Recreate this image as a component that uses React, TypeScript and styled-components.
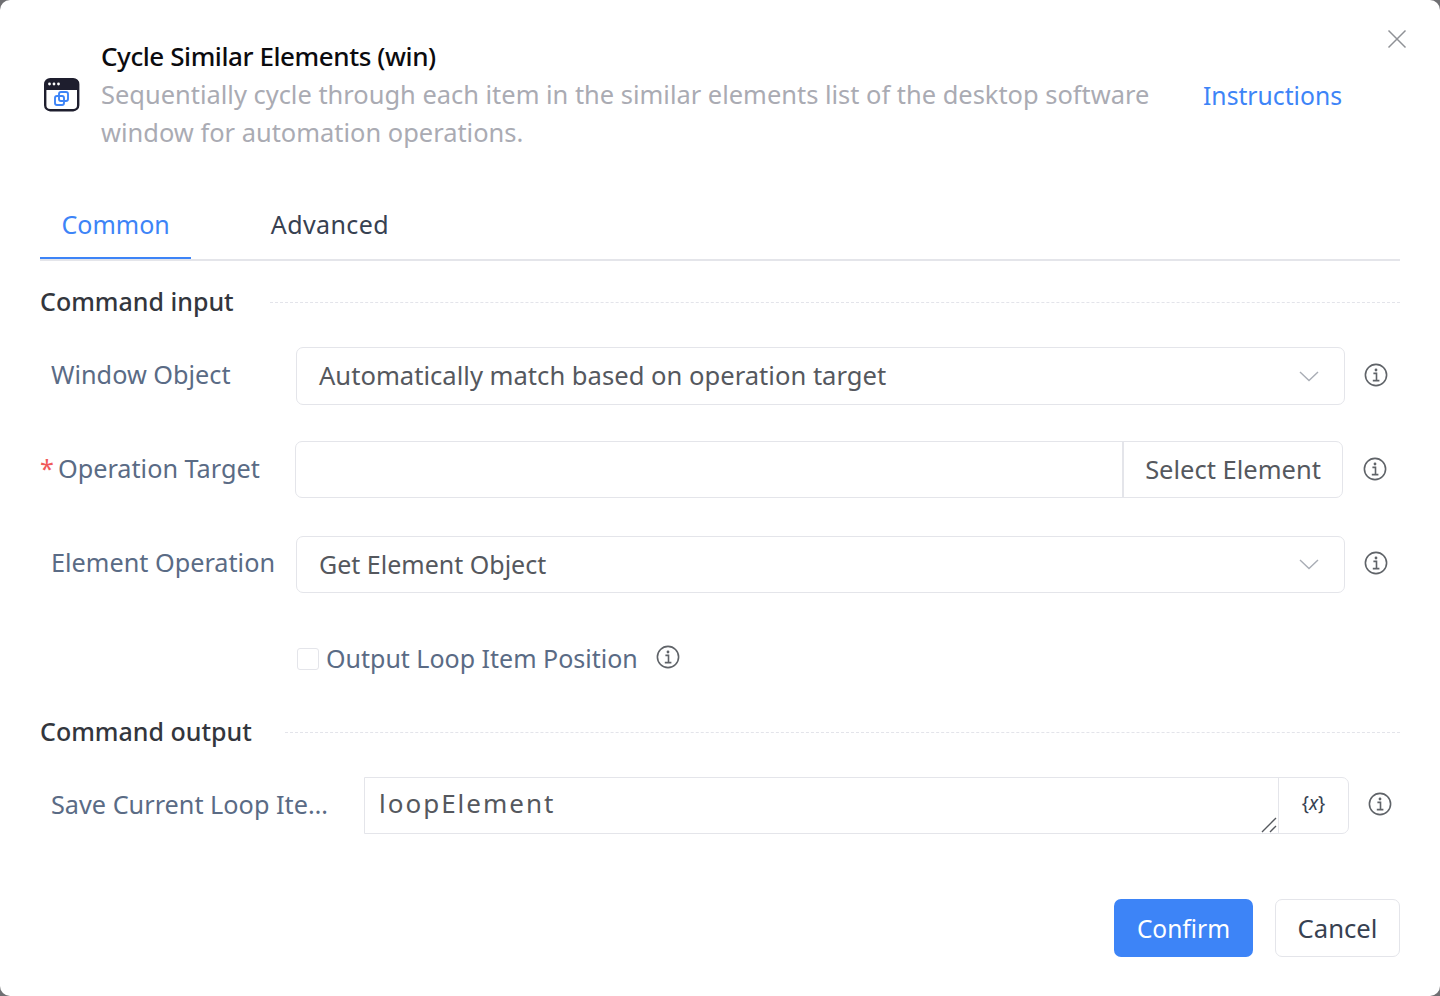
import { createGlobalStyle } from 'styled-components'
import styled from 'styled-components'

const GlobalStyle = createGlobalStyle`
  html, body {
    margin: 0;
    padding: 0;
    background: #6f6f72;
  }
  * {
    box-sizing: border-box;
  }
`

const InfoIcon = () => (
  <InfoSvg viewBox="0 0 24 24" fill="none" stroke="#5f6368">
    <circle cx="12" cy="12" r="10.6" strokeWidth="1.6" />
    <circle cx="12" cy="7" r="1.4" fill="#5f6368" stroke="none" />
    <path d="M9.4 10.4h3.1v7M8.8 17.6h6.6" strokeWidth="1.6" />
  </InfoSvg>
)

const Chevron = () => (
  <ChevronSvg viewBox="0 0 20 11" fill="none" stroke="#a9adb5" strokeWidth="1.4">
    <path d="M1 1l9 8.6L19 1" />
  </ChevronSvg>
)

const WindowIcon = () => (
  <svg width="36" height="34" viewBox="0 0 36 34" fill="none">
    <rect x="1.2" y="1.2" width="33" height="31" rx="5" fill="#fff" stroke="#1e1e2e" strokeWidth="2.4" />
    <path d="M1 12V6a5 5 0 0 1 5-5h24a5 5 0 0 1 5 5v6z" fill="#1e1e2e" />
    <circle cx="5.5" cy="6" r="1.4" fill="#fff" />
    <circle cx="10" cy="6" r="1.4" fill="#fff" />
    <circle cx="14.5" cy="6" r="1.4" fill="#fff" />
    <rect x="11" y="18" width="9" height="9" rx="2" stroke="#3d84f7" strokeWidth="1.9" />
    <rect x="15" y="14" width="9" height="9" rx="2" stroke="#3d84f7" strokeWidth="1.9" />
  </svg>
)

export default function App() {
  return (
    <>
      <GlobalStyle />
      <Dialog>
        <CloseButton aria-label="close">
          <svg width="20" height="20" viewBox="0 0 20 20" stroke="#8f9196" strokeWidth="1.5">
            <path d="M1.5 1.5l17 17M18.5 1.5l-17 17" />
          </svg>
        </CloseButton>
        <Header>
          <IconSlot>
            <WindowIcon />
          </IconSlot>
          <HeaderText>
            <Title>Cycle Similar Elements (win)</Title>
            <Description>
              Sequentially cycle through each item in the similar elements list of the desktop software window for
              automation operations.
            </Description>
          </HeaderText>
          <HelpLink>Instructions</HelpLink>
        </Header>

        <Tabs>
          <Tab $active>Common</Tab>
          <Tab>Advanced</Tab>
        </Tabs>

        <SectionHead $top={22} $gap={36}>
          <SectionTitle>Command input</SectionTitle>
          <SectionRule />
        </SectionHead>

        <FormRow $top={28}>
          <FieldLabel>Window Object</FieldLabel>
          <SelectBox $height={58}>
            <SelectValue $size={25.6}>Automatically match based on operation target</SelectValue>
            <Chevron />
          </SelectBox>
          <InfoSlot>
            <InfoIcon />
          </InfoSlot>
        </FormRow>

        <FormRow $top={37}>
          <FieldLabel $required>
            <Star>*</Star>Operation Target
          </FieldLabel>
          <TargetGroup>
            <TargetInput />
            <TargetButton>Select Element</TargetButton>
          </TargetGroup>
          <InfoSlot>
            <InfoIcon />
          </InfoSlot>
        </FormRow>

        <FormRow $top={38}>
          <FieldLabel $lift={6}>Element Operation</FieldLabel>
          <SelectBox $height={57}>
            <SelectValue $size={25}>Get Element Object</SelectValue>
            <Chevron />
          </SelectBox>
          <InfoSlot $lift={4}>
            <InfoIcon />
          </InfoSlot>
        </FormRow>

        <CheckRow>
          <CheckBox />
          <CheckText>Output Loop Item Position</CheckText>
          <InfoIcon />
        </CheckRow>

        <SectionHead $top={37} $gap={33}>
          <SectionTitle>Command output</SectionTitle>
          <SectionRule />
        </SectionHead>

        <OutputRow>
          <OutputLabel>Save Current Loop Item To</OutputLabel>
          <OutputGroup>
            <OutputValue>
              loopElement
              <ResizeGrip viewBox="0 0 16 16" stroke="#55585e" strokeWidth="1.4">
                <path d="M1 15L15 1M9 15l6-6" />
              </ResizeGrip>
            </OutputValue>
            <VarButton>
              {'{'}
              <em>x</em>
              {'}'}
            </VarButton>
          </OutputGroup>
          <InfoSlot $lift={4}>
            <InfoIcon />
          </InfoSlot>
        </OutputRow>

        <Footer>
          <PrimaryButton>Confirm</PrimaryButton>
          <GhostButton>Cancel</GhostButton>
        </Footer>
      </Dialog>
    </>
  )
}

const Dialog = styled.div`
  position: relative;
  width: 1440px;
  height: 996px;
  padding: 37px 40px 0;
  background: #fff;
  border-radius: 10px;
  font-family: 'Noto Sans', sans-serif;
  overflow: hidden;
`

const CloseButton = styled.button`
  position: absolute;
  top: 29px;
  right: 33px;
  width: 20px;
  height: 20px;
  padding: 0;
  border: 0;
  background: none;
`

const Header = styled.div`
  display: flex;
  align-items: center;
  height: 114px;
`

const IconSlot = styled.div`
  width: 61px;
  margin-top: 2px;
  padding: 0 0 0 4px;
  display: flex;
`

const HeaderText = styled.div`
  width: 1102px;
`

const Title = styled.div`
  font-size: 26px;
  font-weight: 500;
  line-height: 38px;
  letter-spacing: -0.42px;
  color: #0b0b0f;
`

const Description = styled.div`
  font-size: 25.45px;
  line-height: 38px;
  color: #aaabb3;
`

const HelpLink = styled.a`
  margin-top: 4px;
  font-size: 24.7px;
  line-height: 38px;
  color: #3d84f7;
`

const Tabs = styled.div`
  display: flex;
  gap: 58px;
  height: 65px;
  margin-top: 45px;
  border-bottom: 2px solid #e4e5ea;
`

const Tab = styled.div<{ $active?: boolean }>`
  height: 63px;
  padding: 0 21.5px;
  font-size: 25px;
  line-height: 56px;
  letter-spacing: ${(p) => (p.$active ? 0 : 0.4)}px;
  color: ${(p) => (p.$active ? '#3d84f7' : '#374151')};
  border-bottom: 2px solid ${(p) => (p.$active ? '#3d84f7' : 'transparent')};
`

const SectionHead = styled.div<{ $top: number; $gap: number }>`
  display: flex;
  align-items: center;
  gap: ${(p) => p.$gap}px;
  height: 36px;
  margin-top: ${(p) => p.$top}px;
`

const SectionTitle = styled.div`
  font-size: 25px;
  font-weight: 500;
  color: #33363d;
  white-space: nowrap;
`

const SectionRule = styled.div`
  flex: 1;
  margin-top: 2px;
  border-top: 1px dashed #e3e4ea;
`

const FormRow = styled.div<{ $top: number }>`
  display: flex;
  align-items: center;
  height: 57px;
  margin-top: ${(p) => p.$top}px;
`

const FieldLabel = styled.div<{ $required?: boolean; $lift?: number }>`
  width: 256px;
  padding-left: ${(p) => (p.$required ? 0 : 11)}px;
  padding-bottom: ${(p) => p.$lift ?? 4}px;
  font-size: 25.25px;
  color: #5a6b85;
  white-space: nowrap;
`

const Star = styled.span`
  margin-right: 4px;
  color: #f05a5a;
`

const SelectBox = styled.div<{ $height: number }>`
  flex: 0 0 1049px;
  height: ${(p) => p.$height}px;
  align-self: flex-start;
  display: flex;
  align-items: center;
  justify-content: space-between;
  padding: 0 25px 2px 22px;
  border: 1px solid #e4e5ea;
  border-radius: 7px;
`

const SelectValue = styled.div<{ $size: number }>`
  font-size: ${(p) => p.$size}px;
  color: #55585e;
`

const ChevronSvg = styled.svg`
  width: 20px;
  height: 11px;
  margin-top: 2px;
`

const InfoSlot = styled.div<{ $lift?: number }>`
  display: flex;
  margin-left: 19px;
  padding-bottom: ${(p) => p.$lift ?? 2}px;
`

const InfoSvg = styled.svg`
  width: 24px;
  height: 24px;
  flex: none;
`

const TargetGroup = styled.div`
  flex: 0 0 1048px;
  margin-left: -1px;
  display: flex;
  height: 57px;
  border: 1px solid #e4e5ea;
  border-radius: 7px;
  margin-right: 1px;
`

const TargetInput = styled.div`
  width: 828px;
  border-right: 2px solid #e4e5ea;
`

const TargetButton = styled.div`
  flex: 1;
  text-align: center;
  font-size: 25.5px;
  line-height: 55px;
  color: #55585e;
`

const CheckRow = styled.div`
  display: flex;
  align-items: center;
  height: 38px;
  margin-top: 45px;
  padding-left: 257px;
`

const CheckBox = styled.div`
  width: 22px;
  height: 22px;
  margin-top: 4px;
  border: 1px solid #e4e5ea;
  border-radius: 3px;
`

const CheckText = styled.div`
  margin: 2px 18px 0 7px;
  font-size: 25px;
  color: #5a6b85;
`

const OutputRow = styled.div`
  display: flex;
  align-items: center;
  height: 57px;
  margin-top: 28px;
`

const OutputLabel = styled.div`
  width: 324px;
  padding: 0 32px 4px 11px;
  font-size: 25.25px;
  color: #5a6b85;
  white-space: nowrap;
  overflow: hidden;
  text-overflow: ellipsis;
`

const OutputGroup = styled.div`
  flex: 0 0 985px;
  height: 57px;
  display: flex;
  border: 1px solid #e4e5ea;
  border-radius: 0 7px 7px 0;
`

const OutputValue = styled.div`
  position: relative;
  flex: 1;
  padding-left: 14px;
  font-size: 26px;
  line-height: 50px;
  letter-spacing: 2px;
  color: #55585e;
`

const ResizeGrip = styled.svg`
  position: absolute;
  right: 1px;
  bottom: 0;
  width: 16px;
  height: 16px;
`

const VarButton = styled.div`
  width: 70px;
  border-left: 1px solid #e4e5ea;
  text-align: center;
  font-size: 19px;
  line-height: 50px;
  color: #374151;
`

const Footer = styled.div`
  display: flex;
  justify-content: flex-end;
  gap: 22px;
  margin-top: 65px;
`

const PrimaryButton = styled.button`
  width: 139px;
  height: 58px;
  border: 0;
  border-radius: 7px;
  background: #3d84f7;
  color: #fff;
  font-family: inherit;
  font-size: 24.5px;
`

const GhostButton = styled.button`
  width: 125px;
  height: 58px;
  border: 1px solid #e4e5ea;
  border-radius: 7px;
  background: #fff;
  color: #374151;
  font-family: inherit;
  font-size: 25.7px;
`
